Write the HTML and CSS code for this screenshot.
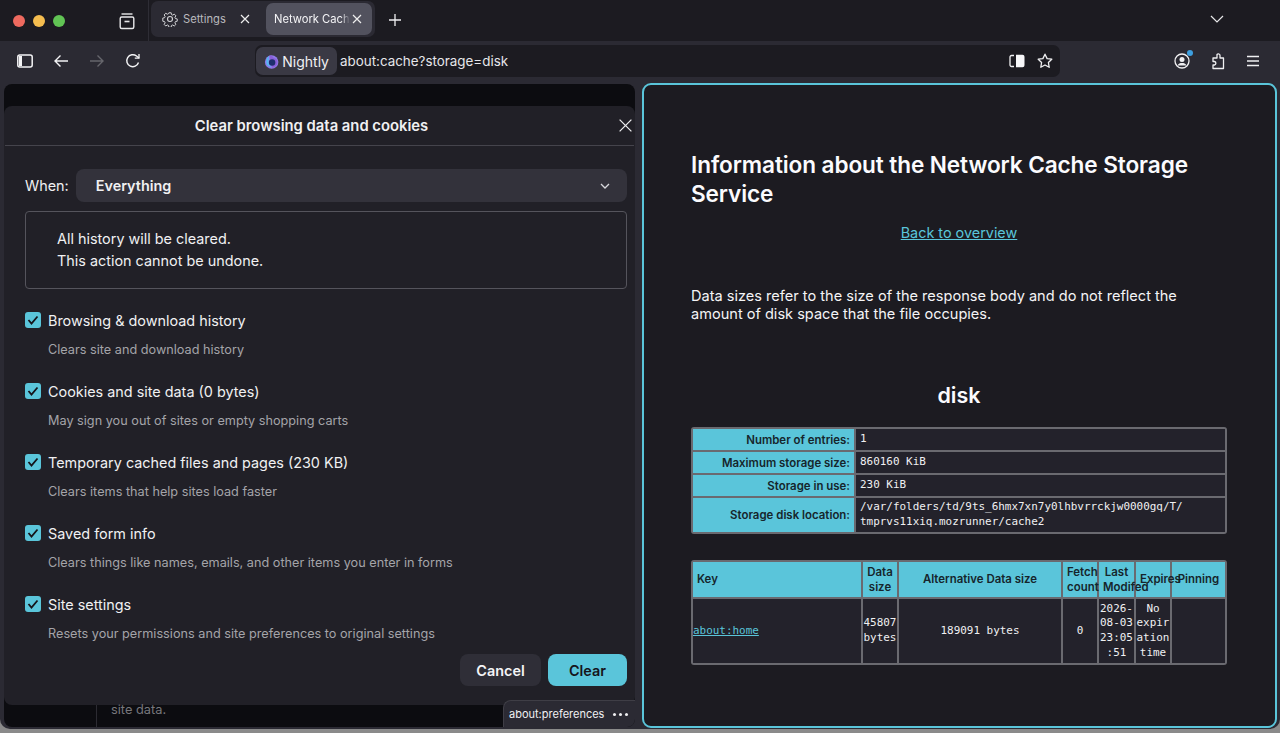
FILE: index.html
```html
<!DOCTYPE html>
<html lang="en">
<head>
    <meta charset="UTF-8">
    <title>Network Cache</title>
    <link rel="stylesheet" href="styles.css">
</head>
<body>
    <div class="window">
        <div class="tabbar">
            <div class="traffic">
                <span class="light red"></span>
                <span class="light yellow"></span>
                <span class="light green"></span>
            </div>
            <div class="tab-manager">
                <svg width="18" height="18" viewBox="0 0 18 18" fill="none" stroke="#e8e8ea" stroke-width="1.4"><path d="M3.5 2h11"/><rect x="2.2" y="5" width="13.6" height="11.5" rx="1.5"/><path d="M6.5 9.5h5" stroke-width="1.6"/></svg>
            </div>
            <div class="tabs">
                <div class="tab">
                    <svg class="tab-icon" width="16" height="16" viewBox="0 0 16 16" fill="none" stroke="#d5d5d8" stroke-width="1.1"><path d="M6.7 1h2.6l.4 2 1.3.6 1.8-1.1 1.8 1.9-1.1 1.7.6 1.4 2 .4v2.600l-2 .4-.6 1.400 1.100 1.700-1.800 1.800-1.800-1.100-1.300.6-.4 2H6.700l-.4-2-1.300-.6-1.800 1.100-1.800-1.800 1.100-1.700-.6-1.400-2-.4V6.900l2-.4.6-1.400-1.100-1.700 1.800-1.900 1.800 1.100 1.300-.6z" transform="translate(.9 .9) scale(.89)"/><circle cx="8" cy="8" r="2.500"/></svg>
                    <span class="tab-title">Settings</span>
                    <span class="tab-close">
                        <svg width="10" height="10" viewBox="0 0 10 10" stroke="#eee" stroke-width="1.2"><path d="M1 1l8 8M9 1l-8 8"/></svg>
                    </span>
                </div>
                <div class="tab active">
                    <span class="tab-title">Network Cache</span>
                    <span class="tab-close">
                        <svg width="10" height="10" viewBox="0 0 10 10" stroke="#eee" stroke-width="1.2"><path d="M1 1l8 8M9 1l-8 8"/></svg>
                    </span>
                </div>
            </div>
            <div class="new-tab">
                <svg width="14" height="14" viewBox="0 0 14 14" stroke="#f0f0f2" stroke-width="1.3"><path d="M7 1v12M1 7h12"/></svg>
            </div>
            <div class="tab-list">
                <svg width="14" height="8" viewBox="0 0 14 8" fill="none" stroke="#e8e8ea" stroke-width="1.2"><path d="M1 1l6 6 6-6"/></svg>
            </div>
        </div>

        <div class="toolbar">
            <div class="nav-left">
                <svg width="16" height="14" viewBox="0 0 16 14" fill="none" stroke="#f4f4f6" stroke-width="1.500"><rect x=".8" y="1" width="14.400" height="12" rx="2"/><path d="M2 2h3v10H2z" fill="#f4f4f6" stroke="none"/></svg>
                <svg width="16" height="14" viewBox="0 0 16 14" fill="none" stroke="#f4f4f6" stroke-width="1.400"><path d="M15 7H2M7.500 1.500L2 7l5.500 5.500"/></svg>
                <svg width="16" height="14" viewBox="0 0 16 14" fill="none" stroke="#66666c" stroke-width="1.400"><path d="M1 7h13M8.500 1.500L14 7l-5.500 5.500"/></svg>
                <svg width="16" height="16" viewBox="0 0 16 16" fill="none" stroke="#f4f4f6" stroke-width="1.400"><path d="M13.500 9.500A6 6 0 1 1 11.500 3L14 5"/><path d="M14 1v4.200H9.800" stroke-width="1.300"/></svg>
            </div>
            <div class="urlbar">
                <div class="identity">
                    <svg width="17" height="17" viewBox="0 0 17 17"><circle cx="8.500" cy="9" r="7.500" fill="#8d7ae8"/><path d="M6 1.500c3 0 3.500 1.500 5 3 2 .5 4 2 4 4.500a6.500 6.500 0 0 1-6 6.500z" fill="#8a5fd8"/><circle cx="9" cy="9.500" r="3.600" fill="#1d2f6e"/><path d="M2.500 9c0-3 1-5 3-6.500-.5 2.500 0 4-.5 6.500 0 2 1 4 3.500 5.500-3.500 0-6-2.500-6-5.500z" fill="#53b8f0"/></svg>
                    <span>Nightly</span>
                </div>
                <span class="url">about:cache?storage=disk</span>
                <div class="url-icons">
                    <svg width="16" height="14" viewBox="0 0 16 14"><path d="M5 1.500H2.500a1.500 1.500 0 0 0-1.500 1.500v8a1.500 1.500 0 0 0 1.500 1.500H5" fill="none" stroke="#f0f0f2" stroke-width="1.300"/><path d="M7 .8h6.500A2 2 0 0 1 15.500 2.800v8.400a2 2 0 0 1-2 2H7z" fill="#f6f6f8"/></svg>
                    <svg width="16" height="16" viewBox="0 0 16 16" fill="none" stroke="#f0f0f2" stroke-width="1.300" stroke-linejoin="round"><path d="M8 1.200l2.100 4.400 4.700.6-3.400 3.300.8 4.800L8 12l-4.200 2.300.8-4.800L1.200 6.200l4.700-.6z"/></svg>
                </div>
            </div>
            <div class="nav-right">
                <div class="account">
                    <svg width="16" height="16" viewBox="0 0 16 16" fill="none" stroke="#f0f0f2" stroke-width="1.300"><circle cx="8" cy="8" r="7"/><circle cx="8" cy="6.500" r="2.500" fill="#f0f0f2" stroke="none"/><path d="M3.500 12.500c1-2 2.500-2.500 4.500-2.500s3.500.5 4.500 2.500" fill="#f0f0f2" stroke="none"/></svg>
                    <span class="account-dot"></span>
                </div>
                <svg width="16" height="17" viewBox="0 0 16 17" fill="none" stroke="#f0f0f2" stroke-width="1.300" stroke-linejoin="round"><path d="M7 1.500a1.700 1.700 0 0 1 3 1.200V5h3.500v10.500H3V12h1.500a1.800 1.800 0 0 0 0-3.500H3V5h4V2.700z"/></svg>
                <svg width="14" height="12" viewBox="0 0 14 12" stroke="#f0f0f2" stroke-width="1.300"><path d="M1 1.500h12M1 6h12M1 10.500h12"/></svg>
            </div>
        </div>

        <div class="content">
            <div class="pane-left">
                <div class="dialog">
                    <div class="dialog-head">
                        <h2>Clear browsing data and cookies</h2>
                        <svg class="dialog-close" width="13" height="13" viewBox="0 0 13 13" stroke="#e8e8ea" stroke-width="1.300"><path d="M.6.6l11.800 11.800M12.400.6L.6 12.400"/></svg>
                    </div>
                    <div class="dialog-body">
                        <div class="when">
                            <label>When:</label>
                            <div class="when-select">
                                <span>Everything</span>
                                <svg width="10" height="6" viewBox="0 0 10 6" fill="none" stroke="#d8d8dc" stroke-width="1.300"><path d="M1 1l4 4 4-4"/></svg>
                            </div>
                        </div>
                        <div class="notice">
                            <p>All history will be cleared.</p>
                            <p>This action cannot be undone.</p>
                        </div>
                        <div class="options">
                            <div class="option">
                                <div class="option-row">
                                    <span class="check"><svg width="12" height="10" viewBox="0 0 12 10" fill="none" stroke="#15141a" stroke-width="1.800"><path d="M1.500 5l3 3.500 6-7"/></svg></span>
                                    <span>Browsing &amp; download history</span>
                                </div>
                                <p class="option-desc">Clears site and download history</p>
                            </div>
                            <div class="option">
                                <div class="option-row">
                                    <span class="check"><svg width="12" height="10" viewBox="0 0 12 10" fill="none" stroke="#15141a" stroke-width="1.800"><path d="M1.500 5l3 3.500 6-7"/></svg></span>
                                    <span>Cookies and site data (0 bytes)</span>
                                </div>
                                <p class="option-desc">May sign you out of sites or empty shopping carts</p>
                            </div>
                            <div class="option">
                                <div class="option-row">
                                    <span class="check"><svg width="12" height="10" viewBox="0 0 12 10" fill="none" stroke="#15141a" stroke-width="1.800"><path d="M1.500 5l3 3.500 6-7"/></svg></span>
                                    <span>Temporary cached files and pages (230 KB)</span>
                                </div>
                                <p class="option-desc">Clears items that help sites load faster</p>
                            </div>
                            <div class="option">
                                <div class="option-row">
                                    <span class="check"><svg width="12" height="10" viewBox="0 0 12 10" fill="none" stroke="#15141a" stroke-width="1.800"><path d="M1.500 5l3 3.500 6-7"/></svg></span>
                                    <span>Saved form info</span>
                                </div>
                                <p class="option-desc">Clears things like names, emails, and other items you enter in forms</p>
                            </div>
                            <div class="option">
                                <div class="option-row">
                                    <span class="check"><svg width="12" height="10" viewBox="0 0 12 10" fill="none" stroke="#15141a" stroke-width="1.800"><path d="M1.500 5l3 3.500 6-7"/></svg></span>
                                    <span>Site settings</span>
                                </div>
                                <p class="option-desc">Resets your permissions and site preferences to original settings</p>
                            </div>
                        </div>
                    </div>
                    <div class="dialog-buttons">
                        <button class="btn">Cancel</button>
                        <button class="btn btn-primary">Clear</button>
                    </div>
                </div>
                <div class="behind">
                    <span>site data.</span>
                </div>
                <div class="status">
                    <span>about:preferences</span>
                    <span class="dots"><i></i><i></i><i></i></span>
                </div>
            </div>

            <div class="pane-right">
                <h1>Information about the Network Cache Storage Service</h1>
                <a class="back" href="#">Back to overview</a>
                <p class="intro">Data sizes refer to the size of the response body and do not reflect the amount of disk space that the file occupies.</p>
                <h2 class="storage-name">disk</h2>
                <table class="info">
                    <tr><th>Number of entries:</th><td>1</td></tr>
                    <tr><th>Maximum storage size:</th><td>860160 KiB</td></tr>
                    <tr><th>Storage in use:</th><td>230 KiB</td></tr>
                    <tr class="tall"><th>Storage disk location:</th><td>/var/folders/td/9ts_6hmx7xn7y0lhbvrrckjw0000gq/T/<br>tmprvs11xiq.mozrunner/cache2</td></tr>
                </table>
                <table class="entries">
                    <colgroup>
                        <col class="c-key"><col class="c-size"><col class="c-alt"><col class="c-fetch"><col class="c-mod"><col class="c-exp"><col class="c-pin">
                    </colgroup>
                    <tr>
                        <th class="left">Key</th>
                        <th>Data size</th>
                        <th>Alternative Data size</th>
                        <th>Fetch count</th>
                        <th>Last Modifed</th>
                        <th>Expires</th>
                        <th>Pinning</th>
                    </tr>
                    <tr>
                        <td class="left"><a href="#">about:home</a></td>
                        <td>45807 bytes</td>
                        <td>189091 bytes</td>
                        <td>0</td>
                        <td>2026-08-03 23:05:51</td>
                        <td>No expiration time</td>
                        <td></td>
                    </tr>
                </table>
            </div>
        </div>
    </div>
</body>
</html>
```

FILE: styles.css
```css
* {
    box-sizing: border-box;
}
html, body {
    height: 100%;
}
body {
    margin: 0;
    background-color: #8a8a8a;
    font-family: Inter, "Noto Sans", sans-serif;
    color: #fbfbfe;
    overflow: hidden;
}
p, h1, h2 {
    margin: 0;
}
.window {
    height: 729px;
    background-color: #2b2a33;
    border-radius: 0 0 10px 10px;
    display: flex;
    flex-direction: column;
    overflow: hidden;
}
.tabbar {
    height: 41px;
    flex: none;
    background-color: #1c1b21;
    display: flex;
    align-items: center;
}
.traffic {
    display: flex;
    gap: 8px;
    padding-left: 13px;
    width: 110px;
}
.light {
    width: 12px;
    height: 12px;
    border-radius: 50%;
}
.red { background-color: #ee6a5f; }
.yellow { background-color: #f5bd4f; }
.green { background-color: #61c454; }
.tab-manager {
    width: 39px;
    height: 41px;
    border-right: 1px solid #2e2d35;
    display: flex;
    align-items: center;
    padding-left: 8px;
}
.tabs {
    margin: 1px 0 0 2px;
    width: 224px;
    height: 36px;
    flex: none;
    border-radius: 7px;
    background-color: #2b2a33;
    display: flex;
    align-items: center;
    padding: 2px 3px 2px 11px;
    align-self: flex-start;
}
.tab {
    width: 104px;
    flex: none;
    display: flex;
    align-items: center;
    font-size: 11.2px;
    height: 32px;
    color: #b9b9bd;
}
.tab-icon {
    flex: none;
    margin-right: 5px;
}
.tab-title {
    overflow: hidden;
    white-space: nowrap;
    flex: 1;
}
.tab-close {
    flex: none;
    width: 10px;
    display: flex;
    margin-right: 16px;
}
.tab.active {
    width: 106px;
    background-color: #52525e;
    border-radius: 7px;
    padding-left: 8px;
    color: #f4f4f6;
}
.tab.active .tab-title {
    -webkit-mask-image: linear-gradient(to right, #000 88%, transparent);
    mask-image: linear-gradient(to right, #000 88%, transparent);
}
.tab.active .tab-close {
    margin-right: 10px;
    margin-left: 2px;
}
.new-tab {
    margin: -2px 0 0 13px;
    display: flex;
}
.tab-list {
    margin-left: auto;
    margin-right: 56px;
    display: flex;
    margin-top: -4px;
}
.toolbar {
    height: 42px;
    flex: none;
    display: flex;
    align-items: center;
    padding: 0 20px 2px 0;
}
.nav-left {
    width: 255px;
    padding-left: 17px;
    display: flex;
    align-items: center;
    gap: 20px;
}
.urlbar {
    width: 805px;
    height: 32px;
    background-color: #1c1b21;
    border-radius: 7px;
    display: flex;
    align-items: center;
    font-size: 14px;
}
.identity {
    display: flex;
    align-items: center;
    gap: 3px;
    background-color: #3a3944;
    height: 28px;
    border-radius: 7px;
    padding: 0 8px;
    margin-left: 1px;
    width: 81px;
    font-size: 14px;
    color: #f0f0f2;
}
.url {
    margin-left: 3px;
    font-size: 13.4px;
    color: #e6e6ea;
}
.url-icons {
    margin-left: auto;
    margin-right: 7px;
    display: flex;
    align-items: center;
    gap: 12px;
}
.nav-right {
    margin-left: auto;
    display: flex;
    align-items: center;
    gap: 20px;
}
.account {
    position: relative;
    display: flex;
}
.account-dot {
    position: absolute;
    top: -3px;
    right: -3px;
    width: 6px;
    height: 6px;
    border-radius: 50%;
    background-color: #3d9fe0;
}
.content {
    flex: 1;
    display: flex;
    padding: 0 3px 0 4px;
    gap: 7px;
    min-height: 0;
}
.pane-left {
    position: relative;
    width: 631px;
    flex: none;
    margin-top: 1px;
    margin-bottom: 2px;
    background-color: #0c0c10;
    border-radius: 8px;
    overflow: hidden;
    display: flex;
    flex-direction: column;
    padding-top: 22px;
}
.dialog {
    height: 599px;
    flex: none;
    background-color: #212027;
    border-radius: 8px;
    display: flex;
    flex-direction: column;
}
.dialog-head {
    position: relative;
    height: 40px;
    flex: none;
    display: flex;
    align-items: center;
    justify-content: center;
    border-bottom: 1px solid #45444c;
    margin: 0 1px;
    padding-right: 16px;
}
.dialog-head h2 {
    font-size: 14.8px;
    font-weight: 600;
    color: #f0f0f2;
}
.dialog-close {
    position: absolute;
    right: 2px;
    top: 13px;
}
.dialog-body {
    flex: 1;
    padding: 23px 8px 0 21px;
    overflow: hidden;
}
.when {
    display: flex;
    align-items: center;
    font-size: 14.4px;
    height: 33px;
    gap: 7px;
}
.when label {
    color: #f0f0f2;
}
.when-select {
    flex: 1;
    height: 33px;
    background-color: #33323b;
    border-radius: 8px;
    display: flex;
    align-items: center;
    justify-content: space-between;
    padding: 0 17px 0 20px;
    font-weight: 600;
    color: #f0f0f2;
}
.notice {
    margin-top: 9px;
    height: 78px;
    border: 1px solid #55545c;
    border-radius: 4px;
    padding: 16px 31px 0;
    font-size: 14.4px;
    line-height: 22px;
    color: #f0f0f2;
}
.options {
    margin-top: 23px;
}
.option {
    height: 71px;
}
.option-row {
    display: flex;
    align-items: center;
    font-size: 14.4px;
    color: #f0f0f2;
    height: 16px;
    gap: 7px;
}
.check {
    width: 16px;
    height: 16px;
    flex: none;
    background-color: #5ac5da;
    border-radius: 3px;
    display: flex;
    align-items: center;
    justify-content: center;
}
.option-desc {
    margin-top: 15px;
    margin-left: 23px;
    font-size: 12.7px;
    line-height: 14px;
    color: #a4a4a9;
}
.dialog-buttons {
    flex: none;
    display: flex;
    justify-content: flex-end;
    gap: 7px;
    padding: 0 8px 19px 0;
}
.btn {
    height: 32px;
    padding: 0;
    width: 81px;
    border: none;
    border-radius: 8px;
    background-color: #2f2e37;
    color: #f4f4f6;
    font-family: Inter, "Noto Sans", sans-serif;
    font-size: 14.4px;
    font-weight: 600;
}
.btn-primary {
    width: 79px;
    background-color: #5ac5da;
    color: #15141a;
}
.behind {
    flex: 1;
    margin-left: 92px;
    border-left: 1px solid #2c2b32;
    padding-left: 14px;
    font-size: 12.8px;
    color: #77777c;
    line-height: 10px;
}
.status {
    position: absolute;
    right: 0;
    bottom: 0;
    width: 132px;
    height: 27px;
    background-color: #2b2a33;
    border: 1px solid #3f3e46;
    border-bottom: none;
    border-right: none;
    border-top-left-radius: 8px;
    display: flex;
    align-items: center;
    padding-left: 5px;
    font-size: 11px;
    color: #f0f0f2;
}
.dots {
    margin-left: 9px;
    display: flex;
    gap: 3px;
}
.dots i {
    width: 3px;
    height: 3px;
    background-color: #f0f0f2;
    border-radius: 50%;
}
.pane-right {
    flex: 1;
    min-width: 0;
    margin-bottom: 1px;
    background-color: #1c1b21;
    border: 2px solid #5ac5da;
    border-radius: 9px;
    padding: 65px 48px 0 47px;
    display: flex;
    flex-direction: column;
}
.pane-right h1 {
    font-size: 22.6px;
    line-height: 29px;
    font-weight: 600;
    letter-spacing: -0.1px;
}
.back {
    margin-top: 16px;
    text-align: center;
    font-size: 14.4px;
    line-height: 18px;
    color: #5ac5da;
}
.intro {
    margin-top: 46px;
    font-size: 14.57px;
    line-height: 17.5px;
    width: 510px;
    color: #f4f4f6;
}
.storage-name {
    margin-top: 59px;
    text-align: center;
    font-size: 21.5px;
    line-height: 26px;
    font-weight: 600;
}
table {
    border-collapse: separate;
    border-spacing: 2px;
    table-layout: fixed;
    width: 536px;
    background-color: #6a6a70;
    border-radius: 3px;
}
th, td {
    padding: 0;
}
th {
    background-color: #5ac5da;
    color: #16252c;
    font-size: 11.45px;
    font-weight: 600;
}
td {
    background-color: #23222b;
    font-family: "DejaVu Sans Mono", monospace;
    font-size: 10.95px;
    line-height: 14.6px;
    color: #f0f0f2;
}
.info {
    margin-top: 19px;
}
.info th {
    width: 161px;
    text-align: right;
    padding-right: 4px;
}
.info td {
    padding: 0 4px;
}
.info tr {
    height: 21px;
}
.info tr.tall {
    height: 34px;
}
.entries {
    margin-top: 26px;
}
.entries th {
    line-height: 14.6px;
    padding: 0 4px;
    height: 35px;
    overflow: visible;
}
.entries td {
    text-align: center;
    height: 64px;
    overflow-wrap: anywhere;
}
.entries .left {
    text-align: left;
}
.entries a {
    color: #5ac5da;
}
.c-key { width: 168px; }
.c-size { width: 34px; }
.c-alt { width: 162px; }
.c-fetch { width: 34px; }
.c-mod { width: 35px; }
.c-exp { width: 34px; }
.c-pin { width: 53px; }
```
